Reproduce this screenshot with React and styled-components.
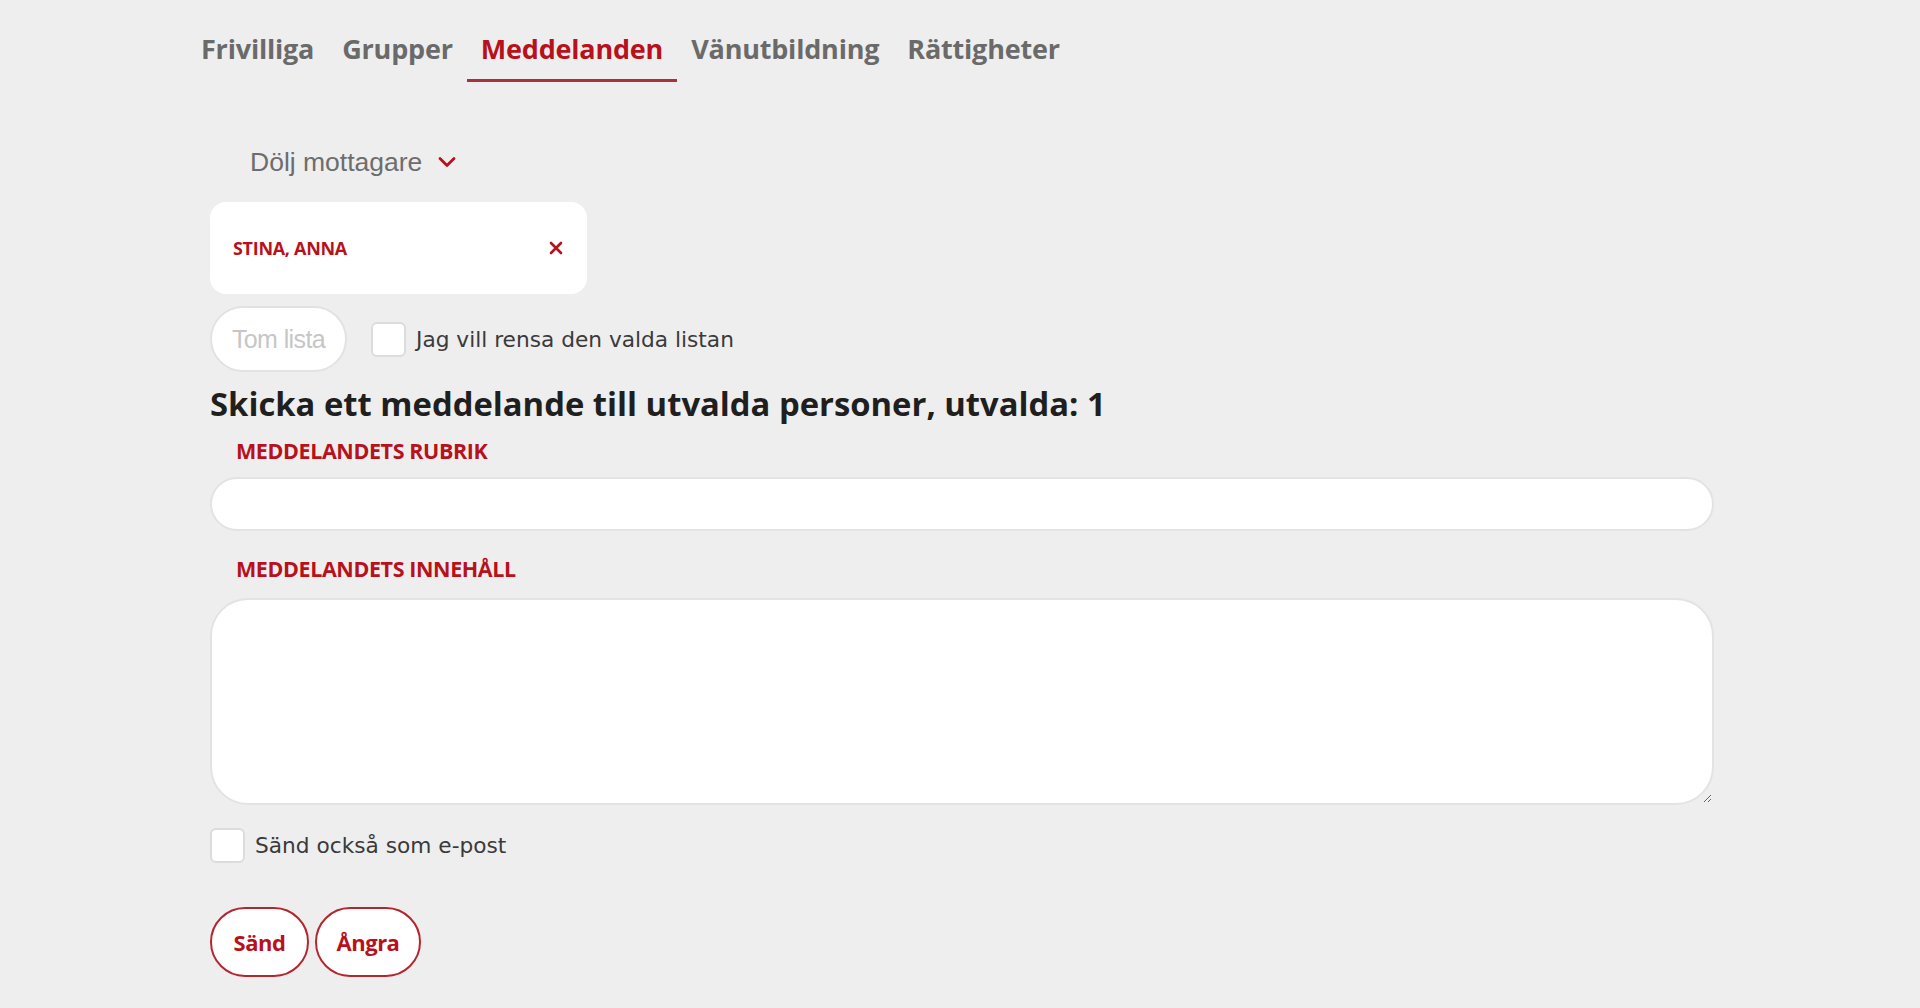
import React from "react";
import styled, { createGlobalStyle } from "styled-components";

const Global = createGlobalStyle`
  html, body { margin: 0; padding: 0; background: #eeeeee; }
  body { font-family: "Open Sans", "Liberation Sans", sans-serif; }
  * { box-sizing: border-box; }
`;

const RED = "#b8111c";

const Page = styled.div`
  min-height: 1008px;
  background: #eeeeee;
  padding: 0 0 0 187px;
  display: flex;
  flex-direction: column;
`;

const Tabs = styled.nav`
  display: flex;
  height: 82px;
  align-items: stretch;
`;

const Tab = styled.a`
  display: flex;
  align-items: flex-start;
  padding: 32px 14px 0;
  line-height: 34px;
  font-family: "Open Sans", sans-serif;
  font-weight: 700;
  font-size: 27px;
  letter-spacing: -0.2px;
  color: ${(p) => (p.$active ? RED : "#6a6a6a")};
  border-bottom: 3px solid ${(p) => (p.$active ? "#a8323a" : "transparent")};
  text-decoration: none;
  cursor: pointer;
`;

const Form = styled.div`
  margin-left: 23px;
  width: 1504px;
  display: flex;
  flex-direction: column;
`;

const ToggleRecipients = styled.button`
  align-self: flex-start;
  margin: 66px 0 0 40px;
  padding: 0;
  border: none;
  background: none;
  display: flex;
  align-items: center;
  gap: 16px;
  font-family: "Liberation Sans", Arial, sans-serif;
  font-size: 26.5px;
  color: #6d6d6d;
  height: 28px;
  cursor: pointer;
`;

const ChipBox = styled.div`
  margin-top: 26px;
  width: 377px;
  height: 92px;
  background: #fff;
  border-radius: 16px;
  display: flex;
  align-items: center;
  justify-content: space-between;
  padding: 0 24px 0 23px;
`;

const ChipName = styled.span`
  font-family: "Open Sans", sans-serif;
  font-weight: 700;
  font-size: 18px;
  color: ${RED};
  letter-spacing: -0.3px;
`;

const RemoveBtn = styled.button`
  border: none;
  background: none;
  padding: 0;
  display: flex;
  cursor: pointer;
`;

const ClearRow = styled.div`
  margin-top: 12px;
  display: flex;
  align-items: center;
  gap: 24px;
`;

const GhostPill = styled.button`
  width: 137px;
  height: 66px;
  border-radius: 33px;
  border: 2px solid #e2e2e2;
  background: #fff;
  color: #c6c6c6;
  font-family: "Liberation Sans", Arial, sans-serif;
  font-size: 25px;
  letter-spacing: -0.6px;
  padding: 0;
  cursor: default;
`;

const CheckLabel = styled.label`
  display: flex;
  align-items: center;
  gap: 10px;
  font-family: "DejaVu Sans", sans-serif;
  font-size: 21.7px;
  color: #3a3a3a;
  cursor: pointer;
`;

const Box = styled.span`
  width: 35px;
  height: 35px;
  background: #fff;
  border: 2px solid #dcdcdc;
  border-radius: 6px;
  display: inline-block;
  flex: none;
`;

const Heading = styled.h2`
  margin: 14px 0 0 0;
  font-family: "Open Sans", sans-serif;
  font-weight: 700;
  font-size: 32.8px;
  line-height: 36px;
  color: #1f1f1f;
  letter-spacing: 0px;
`;

const FieldLabel = styled.label`
  display: block;
  margin: ${(p) => p.$mt}px 0 0 26px;
  font-family: "Open Sans", sans-serif;
  font-weight: 700;
  font-size: 21.5px;
  line-height: 24px;
  color: ${RED};
  letter-spacing: -0.4px;
`;

const TextInput = styled.input`
  margin-top: 14px;
  width: 100%;
  height: 54px;
  border: 2px solid #e3e3e3;
  border-radius: 27px;
  background: #fff;
  padding: 0 24px;
  font-size: 20px;
  outline: none;
`;

const TextArea = styled.textarea`
  margin-top: 17px;
  width: 100%;
  height: 207px;
  border: 2px solid #e3e3e3;
  border-radius: 38px;
  background: #fff;
  padding: 20px 24px;
  font-size: 20px;
  outline: none;
  resize: vertical;
`;

const EmailRow = styled.div`
  margin-top: 23px;
`;

const Actions = styled.div`
  margin-top: 44px;
  display: flex;
  gap: 6px;
`;

const RedPill = styled.button`
  height: 70px;
  width: ${(p) => p.$w}px;
  border-radius: 35px;
  border: 2px solid #b4262e;
  background: #fff;
  color: ${RED};
  font-family: "Open Sans", sans-serif;
  font-weight: 700;
  font-size: 22px;
  letter-spacing: -0.5px;
  padding: 0;
  cursor: pointer;
`;

const Chevron = () => (
  <svg width="18" height="12" viewBox="0 0 18 12" fill="none">
    <path d="M2 2.5l7 7 7-7" stroke={RED} strokeWidth="2.8" strokeLinecap="round" strokeLinejoin="round" />
  </svg>
);

const Cross = () => (
  <svg width="14" height="14" viewBox="0 0 14 14">
    <path d="M2 2l10 10M12 2L2 12" stroke={RED} strokeWidth="2.6" strokeLinecap="round" />
  </svg>
);

export default function App() {
  const tabs = ["Frivilliga", "Grupper", "Meddelanden", "Vänutbildning", "Rättigheter"];
  return (
    <>
      <Global />
      <Page>
        <Tabs>
          {tabs.map((t) => (
            <Tab key={t} $active={t === "Meddelanden"}>{t}</Tab>
          ))}
        </Tabs>
        <Form>
          <ToggleRecipients>
            Dölj mottagare <Chevron />
          </ToggleRecipients>
          <ChipBox>
            <ChipName>STINA, ANNA</ChipName>
            <RemoveBtn aria-label="Ta bort"><Cross /></RemoveBtn>
          </ChipBox>
          <ClearRow>
            <GhostPill disabled>Tom lista</GhostPill>
            <CheckLabel>
              <Box />
              Jag vill rensa den valda listan
            </CheckLabel>
          </ClearRow>
          <Heading>Skicka ett meddelande till utvalda personer, utvalda: 1</Heading>
          <FieldLabel $mt={17}>MEDDELANDETS RUBRIK</FieldLabel>
          <TextInput type="text" />
          <FieldLabel $mt={26}>MEDDELANDETS INNEHÅLL</FieldLabel>
          <TextArea />
          <EmailRow>
            <CheckLabel>
              <Box />
              Sänd också som e-post
            </CheckLabel>
          </EmailRow>
          <Actions>
            <RedPill $w={99}>Sänd</RedPill>
            <RedPill $w={106}>Ångra</RedPill>
          </Actions>
        </Form>
      </Page>
    </>
  );
}
